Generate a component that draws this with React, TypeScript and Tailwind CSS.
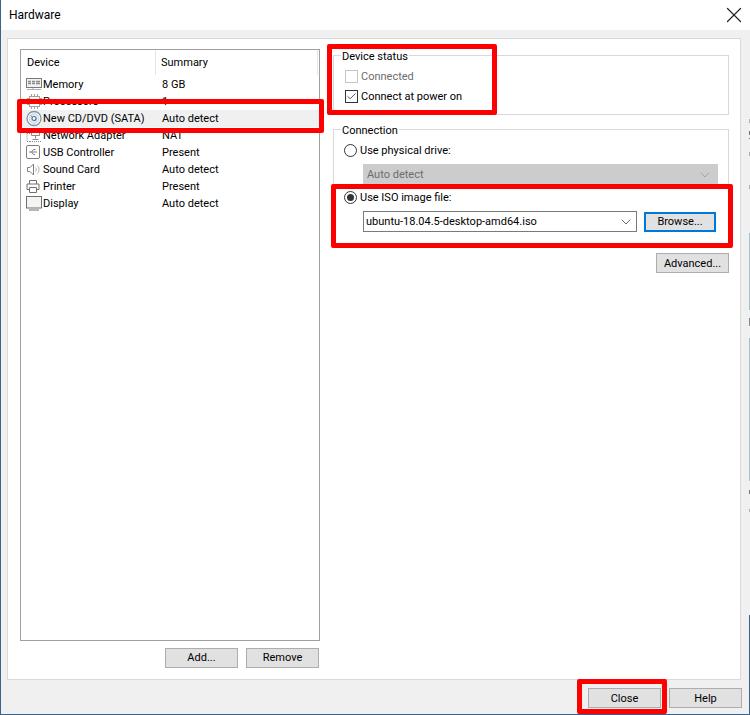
import React from 'react';
import { X, ChevronDown, Check } from 'lucide-react';

const font = { fontFamily: 'Roboto, sans-serif' };

const MemoryIcon = () => (
    <svg width="17" height="15" viewBox="0 0 17 15" fill="none" stroke="#7a7a7a">
        <rect x="0.5" y="1.5" width="15" height="9" fill="#f2f2f2" />
        <path d="M2 4.5h3M6 4.5h3M10 4.5h4M2 6.5h3M6 6.5h3M10 6.5h4" stroke="#8c8c8c" strokeWidth="1.4" />
        <path d="M1 12.5h14M7 11v2" stroke="#b0b0b0" />
    </svg>
);

const ProcessorIcon = () => (
    <svg width="17" height="17" viewBox="0 0 17 17" fill="none" stroke="#a0a0a0">
        <rect x="3.5" y="3.5" width="10" height="10" />
        <path d="M5.5 1v2M8.5 1v2M11.5 1v2M5.5 14v2M8.5 14v2M11.5 14v2M1 5.5h2M1 8.5h2M1 11.5h2M14 5.5h2M14 8.5h2M14 11.5h2" />
    </svg>
);

const DiscIcon = () => (
    <svg width="17" height="17" viewBox="0 0 17 17" fill="none">
        <circle cx="8" cy="8.5" r="7" fill="#fff" stroke="#7f95a8" strokeWidth="1.3" />
        <circle cx="8" cy="8.5" r="4.8" fill="#e4edf3" stroke="#c3d2dd" />
        <circle cx="8" cy="8.5" r="2" fill="#fff" stroke="#4f6f8a" strokeWidth="1.2" />
        <path d="M4.5 5.5l2 1.5" stroke="#6f8aa0" />
    </svg>
);

const NetworkIcon = () => (
    <svg width="17" height="17" viewBox="0 0 17 17" fill="none" stroke="#8a8a8a">
        <path d="M5.5 1.5h8v7h-8z" />
        <path d="M9.5 8.5v3M6.5 12.5h6" />
        <path d="M1 6.5h3M1 6.5v8h3M4 14.5h11" strokeDasharray="1 1" />
    </svg>
);

const UsbIcon = () => (
    <svg width="15" height="15" viewBox="0 0 15 15" fill="none" stroke="#808080">
        <rect x="0.5" y="0.5" width="13" height="13" rx="1.5" />
        <path d="M3 7h8M5.5 7l2-2.5h2M5.5 7l2 2.5h1.5" />
    </svg>
);

const SoundIcon = () => (
    <svg width="15" height="15" viewBox="0 0 15 15" fill="none" stroke="#808080">
        <path d="M1.5 5.5h2.5l3.5-3.5v11l-3.5-3.5h-2.5z" />
        <path d="M9.5 5.5c1 1.2 1 2.8 0 4M11.5 3.5c2 2.4 2 5.6 0 8" stroke="#a8a8a8" />
    </svg>
);

const PrinterIcon = () => (
    <svg width="15" height="15" viewBox="0 0 15 15" fill="none" stroke="#707070">
        <path d="M3.5 5V1.5h7V5" />
        <path d="M3.5 10.5h-2.5v-5.5h12v5.5h-2.5" />
        <path d="M3.5 8.5h7v5h-7z" />
    </svg>
);

const DisplayIcon = () => (
    <svg width="17" height="16" viewBox="0 0 17 16" fill="none" stroke="#6f6f6f">
        <rect x="0.5" y="0.5" width="15" height="11.5" fill="#f4f4f4" />
        <path d="M3 14h10" stroke="#b5b5b5" strokeWidth="2" />
    </svg>
);

const devices = [
    { name: 'Memory', summary: '8 GB', icon: <MemoryIcon /> },
    { name: 'Processors', summary: '1', icon: <ProcessorIcon /> },
    { name: 'New CD/DVD (SATA)', summary: 'Auto detect', icon: <DiscIcon />, selected: true },
    { name: 'Network Adapter', summary: 'NAT', icon: <NetworkIcon /> },
    { name: 'USB Controller', summary: 'Present', icon: <UsbIcon /> },
    { name: 'Sound Card', summary: 'Auto detect', icon: <SoundIcon /> },
    { name: 'Printer', summary: 'Present', icon: <PrinterIcon /> },
    { name: 'Display', summary: 'Auto detect', icon: <DisplayIcon /> },
];

// bits of the window behind, showing down the right edge
const edgeBits = [
    { top: 119, height: 4, color: '#a3b4c4' },
    { top: 131, height: 4, color: '#777777' },
    { top: 138, height: 1, color: '#777777' },
    { top: 152, height: 4, color: '#a3b4c4' },
    { top: 185, height: 4, color: '#a3b4c4' },
    { top: 233, height: 77, color: '#a9bccb' },
    { top: 318, height: 8, color: '#8a8f96' },
    { top: 338, height: 143, color: '#a9bccb' },
    { top: 490, height: 4, color: '#777777' },
    { top: 509, height: 3, color: '#a3b4c4' },
    { top: 615, height: 100, color: '#3e6286' },
];

const Button: React.FC<{ label: string; className?: string }> = ({ label, className }) => (
    <button className={`h-[20px] w-[73px] flex items-center justify-center bg-[#e1e1e1] border border-[#adadad] text-black ${className ?? ''}`}>
        {label}
    </button>
);

const Radio: React.FC<{ checked?: boolean }> = ({ checked }) => (
    <span className="w-[13px] h-[13px] rounded-full border border-[#333] bg-white flex items-center justify-center">
        {checked && <span className="w-[7px] h-[7px] rounded-full bg-[#333]" />}
    </span>
);

const RedBox: React.FC<{ className: string }> = ({ className }) => (
    <div className={`absolute border-[5px] border-[#ff0000] rounded-[2px] pointer-events-none ${className}`} />
);

export default function App() {
    return (
        <div style={font} className="relative w-[750px] h-[715px] overflow-hidden bg-[#f0f0f0] border-l border-b border-[#3e6286] flex flex-col text-[11px] leading-[16px] text-black">
            {/* Title bar */}
            <div className="h-[30px] bg-white flex items-center justify-between shrink-0">
                <span className="ml-[8px] text-[12px]">Hardware</span>
                <X className="w-[26px] h-[26px] mr-[3px] text-[#222]" strokeWidth={1.1} />
            </div>

            {/* Main panel */}
            <div className="mt-[8px] ml-[6px] w-[734px] h-[642px] bg-white border border-[#d9d9d9] flex shrink-0">
                {/* Device list */}
                <div className="ml-[12px] mt-[10px] w-[300px] flex flex-col">
                    <div className="h-[592px] border border-[#a0a0a0] bg-white">
                        <div className="flex h-[25px] items-center">
                            <div className="w-[135px] h-full pl-[6px] flex items-center border-r border-[#e5e5e5]">Device</div>
                            <div className="flex-1 h-full pl-[5px] flex items-center border-r border-[#e5e5e5] mr-[1px]">Summary</div>
                        </div>
                        <div className="mt-[1px]">
                            {devices.map(d => (
                                <div key={d.name} className={`flex h-[17px] items-center ${d.selected ? 'bg-[#f0f0f0]' : ''}`}>
                                    <div className="w-[136px] flex items-center">
                                        <span className="w-[22px] pl-[5px] flex items-center justify-start shrink-0 h-[17px]">{d.icon}</span>
                                        <span className="whitespace-nowrap">{d.name}</span>
                                    </div>
                                    <span className="pl-[5px]">{d.summary}</span>
                                </div>
                            ))}
                        </div>
                    </div>
                    <div className="flex justify-end gap-[8px] mt-[7px] pr-[1px]">
                        <Button label="Add..." />
                        <Button label="Remove" />
                    </div>
                </div>

                {/* Right column */}
                <div className="ml-[13px] mt-[16px] w-[396px] flex flex-col">
                    <fieldset className="h-[60px] border border-[#d9d9d9] relative">
                        <span className="absolute -top-[6px] left-[7px] bg-white px-[1px] leading-[14px]">Device status</span>
                        <div className="mt-[12px] ml-[11px] flex items-center gap-[3px] h-[16px] text-[#6d6d6d]">
                            <span className="w-[13px] h-[13px] border border-[#c4c4c4] bg-white" />
                            <span className="pt-[1px]">Connected</span>
                        </div>
                        <div className="mt-[4px] ml-[11px] flex items-center gap-[3px] h-[16px]">
                            <span className="w-[13px] h-[13px] border border-[#333] bg-white flex items-center justify-center">
                                <Check className="w-[13px] h-[13px] text-[#333]" strokeWidth={1.8} />
                            </span>
                            <span className="pt-[1px]">Connect at power on</span>
                        </div>
                    </fieldset>

                    <fieldset className="mt-[14px] h-[118px] border border-[#d9d9d9] relative">
                        <span className="absolute -top-[6px] left-[7px] bg-white px-[1px] leading-[14px]">Connection</span>
                        <div className="mt-[12px] ml-[10px] flex items-center gap-[3px] h-[16px]">
                            <Radio />
                            <span className="pt-[1px]">Use physical drive:</span>
                        </div>
                        <div className="mt-[6px] ml-[29px] w-[355px] h-[21px] bg-[#cccccc] flex items-center justify-between pl-[4px] pr-[5px] text-[#6d6d6d]">
                            <span className="pt-[1px]">Auto detect</span>
                            <ChevronDown className="w-[16px] h-[16px] text-[#999]" strokeWidth={1.2} />
                        </div>
                        <div className="mt-[4px] ml-[10px] flex items-center gap-[3px] h-[16px]">
                            <Radio checked />
                            <span className="pt-[1px]">Use ISO image file:</span>
                        </div>
                        <div className="mt-[6px] ml-[29px] flex items-center gap-[7px]">
                            <div className="w-[274px] h-[21px] border border-[#7a7a7a] bg-white flex items-center justify-between pl-[2px] pr-[2px]">
                                <span className="pt-[1px]">ubuntu-18.04.5-desktop-amd64.iso</span>
                                <ChevronDown className="w-[16px] h-[16px] text-[#444]" strokeWidth={1.2} />
                            </div>
                            <button className="w-[72px] h-[20px] pt-[1px] bg-[#e1e1e1] border-2 border-[#0078d7] flex items-center justify-center">Browse...</button>
                        </div>
                    </fieldset>

                    <div className="flex justify-end mt-[6px]">
                        <Button label="Advanced..." className="pt-[1px]" />
                    </div>
                </div>
            </div>

            {/* Footer */}
            <div className="flex justify-end gap-[8px] mt-[8px] mr-[8px]">
                <Button label="Close" className="pt-[1px]" />
                <Button label="Help" className="pt-[1px]" />
            </div>

            {/* Right edge */}
            {edgeBits.map(b => (
                <div key={b.top} className="absolute right-0 w-[1px]" style={{ top: b.top, height: b.height, background: b.color }} />
            ))}

            {/* Red annotations */}
            <RedBox className="left-[16px] top-[99px] w-[307px] h-[34px]" />
            <RedBox className="left-[326px] top-[44px] w-[170px] h-[71px]" />
            <RedBox className="left-[330px] top-[184px] w-[402px] h-[64px]" />
            <RedBox className="left-[576px] top-[679px] w-[90px] h-[35px]" />
        </div>
    );
}
